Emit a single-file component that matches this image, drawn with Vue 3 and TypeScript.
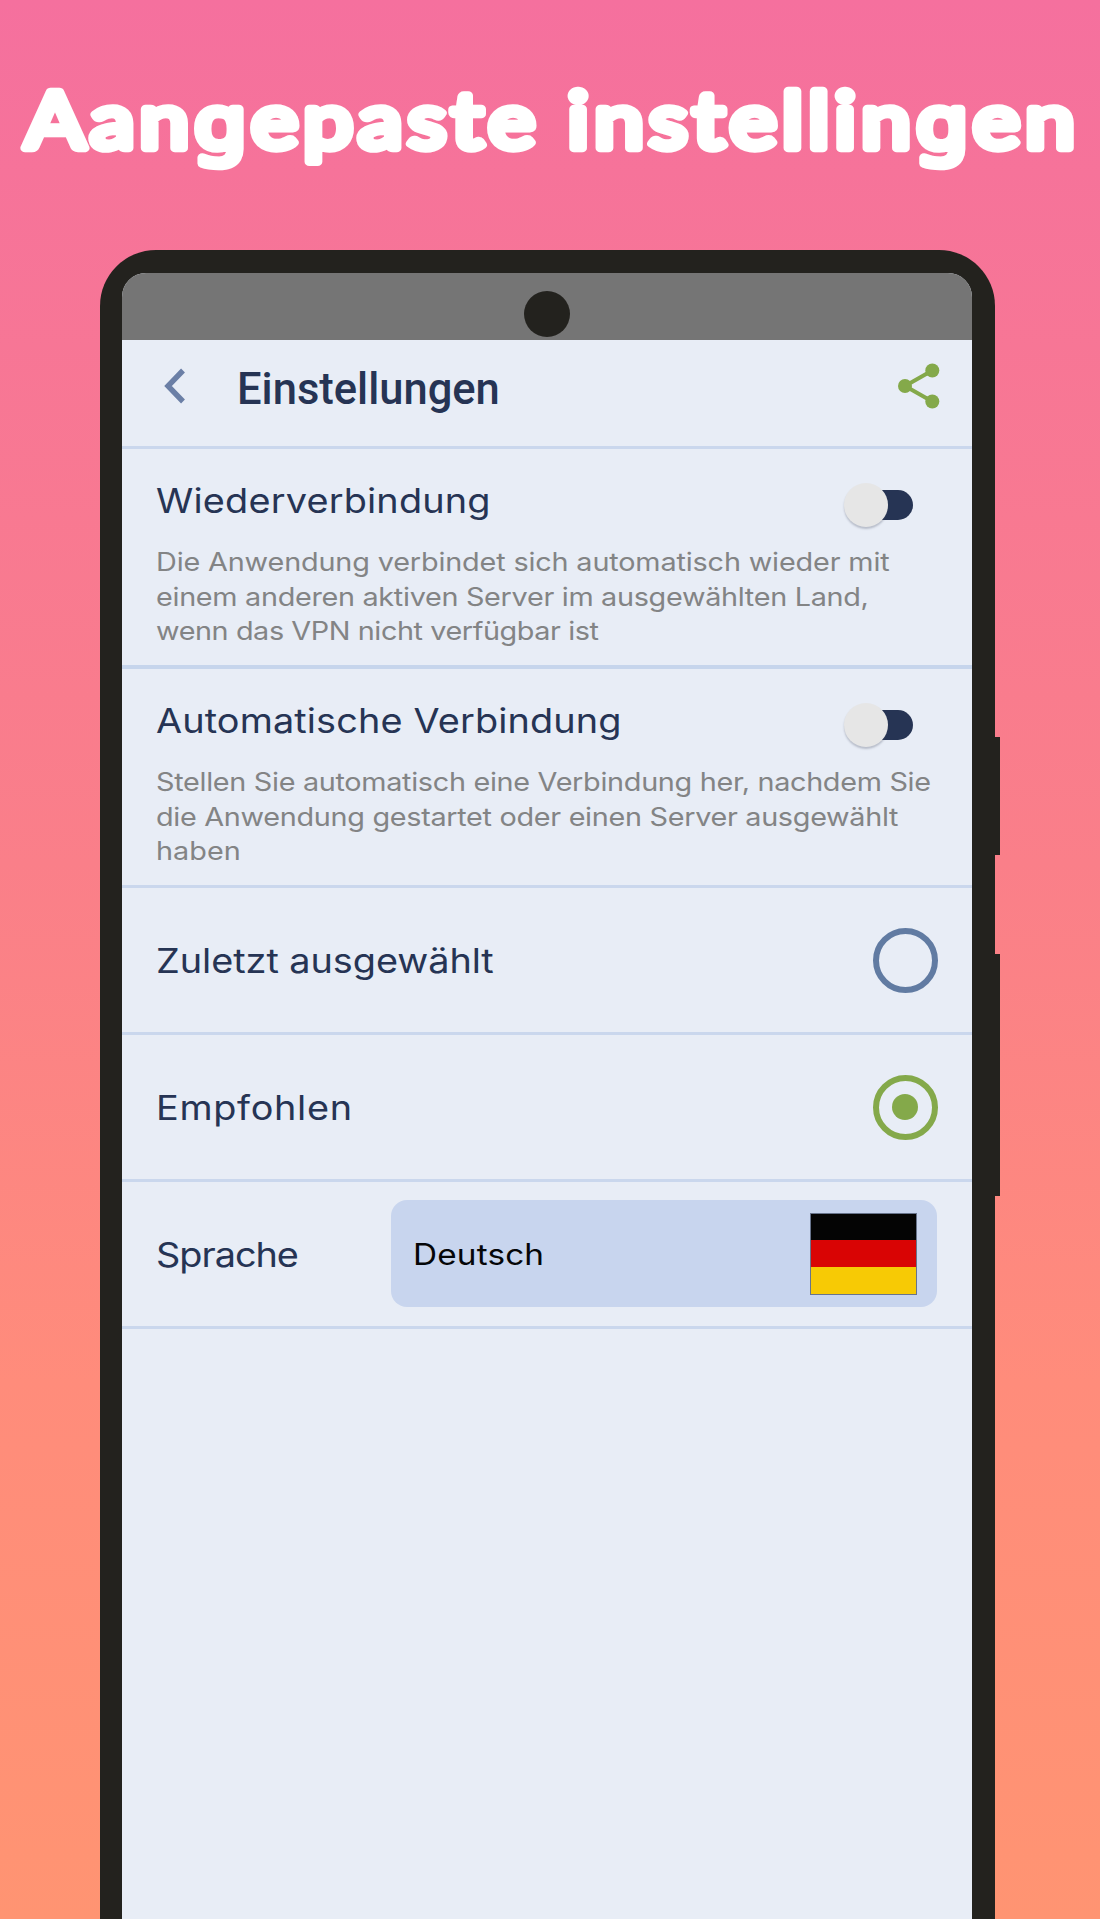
<script setup lang="ts">
import { reactive } from 'vue'

interface Toggle {
  title: string
  titleWidth: number
  lines: { text: string; width: number }[]
  on: boolean
}

const toggles = reactive<Toggle[]>([
  {
    title: 'Wiederverbindung',
    titleWidth: 335,
    lines: [
      { text: 'Die Anwendung verbindet sich automatisch wieder mit', width: 733 },
      { text: 'einem anderen aktiven Server im ausgewählten Land,', width: 712 },
      { text: 'wenn das VPN nicht verfügbar ist', width: 443 },
    ],
    on: false,
  },
  {
    title: 'Automatische Verbindung',
    titleWidth: 466,
    lines: [
      { text: 'Stellen Sie automatisch eine Verbindung her, nachdem Sie', width: 774.5 },
      { text: 'die Anwendung gestartet oder einen Server ausgewählt', width: 742 },
      { text: 'haben', width: 85 },
    ],
    on: false,
  },
])

const options = reactive([
  { label: 'Zuletzt ausgewählt', width: 338, selected: false },
  { label: 'Empfohlen', width: 197, selected: true },
])

function choose(index: number) {
  options.forEach((o, i) => (o.selected = i === index))
}

// Tracks a label out so that it takes the given width, glyphs widened slightly.
const STRETCH = 1.13
const vFit = {
  mounted(el: HTMLElement, binding: { value: number }) {
    const count = (el.textContent ?? '').trim().length
    const gap = (binding.value / STRETCH - el.offsetWidth) / count
    el.style.letterSpacing = `${gap.toFixed(3)}px`
  },
}
</script>

<template>
  <main class="poster">
    <h1 class="headline">
      <svg width="1100" height="130" viewBox="0 0 1100 130">
        <g transform="scale(1.15 1)">
          <text x="21.700" y="84" textLength="443.500">Aan<tspan class="g">g</tspan>epaste</text>
          <text x="493.500" y="84" textLength="441">instellin<tspan class="g">g</tspan>en</text>
        </g>
      </svg>
    </h1>

    <section class="phone">
      <i class="side-button power"></i>
      <i class="side-button volume"></i>
      <div class="screen">
        <div class="status"><span class="camera"></span></div>

        <header class="bar">
          <svg class="back" width="24" height="38" viewBox="0 0 24 38">
            <path d="M20 3.500 L5 19 L20 34.500" fill="none" stroke="#6b7fa6" stroke-width="5.400" />
          </svg>
          <h2>Einstellungen</h2>
          <svg class="share" width="42" height="46" viewBox="0 0 42 46">
            <path d="M34.300 7.500 L7 23 L34.300 38.500" fill="none" stroke="#84a94a" stroke-width="4" />
            <circle cx="34.300" cy="7.500" r="7" />
            <circle cx="7" cy="23" r="7" />
            <circle cx="34.300" cy="38.500" r="7" />
          </svg>
        </header>

        <article v-for="t in toggles" :key="t.title" class="toggle-row">
          <div class="toggle-head">
            <h3 class="label"><span v-fit="t.titleWidth">{{ t.title }}</span></h3>
            <button class="switch" :class="{ on: t.on }" @click="t.on = !t.on"><i></i></button>
          </div>
          <p class="hint">
            <span v-for="l in t.lines" :key="l.text" v-fit="l.width">{{ l.text }}</span>
          </p>
        </article>

        <div v-for="(o, i) in options" :key="o.label" class="option" @click="choose(i)">
          <span class="label"><span v-fit="o.width">{{ o.label }}</span></span>
          <i class="radio" :class="{ selected: o.selected }"></i>
        </div>

        <div class="option language">
          <span class="label"><span v-fit="142">Sprache</span></span>
          <div class="select">
            <span class="value"><span v-fit="131">Deutsch</span></span>
            <span class="flag"><i></i><i></i><i></i></span>
          </div>
        </div>
      </div>
    </section>
  </main>
</template>

<style>
body {
  margin: 0;
}
</style>

<style scoped>
.poster {
  width: 1100px;
  height: 1919px;
  overflow: hidden;
  box-sizing: border-box;
  padding-top: 64px;
  background: linear-gradient(#f5709e, #fa7f89 45%, #ff8c7b 72%, #ff9472);
  font-family: Inter, 'Open Sans', sans-serif;
}

.headline {
  margin: 0;
  height: 186px;
}

.headline text {
  font: 400 77px Lato, sans-serif;
  fill: #fff;
  stroke: #fff;
  stroke-width: 8.500px;
  stroke-linejoin: round;
  stroke-linecap: round;
}

.headline .g {
  font: 400 73px 'Noto Sans', sans-serif;
}

.phone {
  position: relative;
  box-sizing: border-box;
  width: 894.5px;
  height: 1720px;
  margin-left: 100px;
  padding: 23px 22.5px 0 22px;
  border-radius: 56px 56px 0 0;
  background: #23221e;
}

.side-button {
  position: absolute;
  right: -5.5px;
  width: 8px;
  background: #23221e;
}

.power {
  top: 487px;
  height: 118px;
}

.volume {
  top: 704px;
  height: 242px;
}

.screen {
  height: 100%;
  overflow: hidden;
  border-radius: 24px 24px 0 0;
  background: #e8edf6;
}

.status {
  display: flex;
  justify-content: center;
  box-sizing: border-box;
  height: 67px;
  padding: 18px 0 0 0.500px;
  background: #757575;
}

.camera {
  width: 46px;
  height: 46px;
  border-radius: 50%;
  background: #23221e;
}

.bar {
  display: flex;
  align-items: center;
  box-sizing: border-box;
  height: 109px;
  padding: 0 32px 14px 41px;
  border-bottom: 3px solid #cad7ed;
}

.bar h2 {
  flex: 1;
  margin: 7px 0 0 50px;
  font: 500 43.500px/52px Roboto, sans-serif;
  color: #263454;
}

.share {
  fill: #84a94a;
}

.toggle-row {
  box-sizing: border-box;
  height: 220px;
  padding: 26px 0 0 34px;
  border-bottom: 4px solid #c6d5ec;
}

.toggle-row + .toggle-row {
  height: 219px;
  border-bottom: 3px solid #cad7ed;
}

.toggle-head {
  display: flex;
  justify-content: space-between;
  height: 70px;
  padding-right: 59.500px;
}

.label,
.value {
  margin: 0;
  font-weight: 400;
  font-size: 33.500px;
  line-height: 52px;
  color: #263454;
  white-space: nowrap;
}

.label span,
.value span,
.hint span {
  display: inline-block;
  transform: scaleX(1.13);
  transform-origin: 0 50%;
}

.switch {
  display: flex;
  align-items: center;
  width: 69px;
  height: 30px;
  margin: 15px 0 0;
  padding: 0;
  border: 0;
  border-radius: 15px;
  background: linear-gradient(90deg, transparent 50%, #263454 50%);
}

.switch i {
  flex: none;
  width: 44px;
  height: 44px;
  border-radius: 50%;
  background: #e6e6e6;
  box-shadow: 0 2px 2px rgba(60, 70, 90, 0.28);
}

.switch.on {
  justify-content: flex-end;
}

.hint {
  display: flex;
  flex-direction: column;
  align-items: flex-start;
  margin: 0;
  font-size: 25.500px;
  line-height: 34.600px;
  color: #838485;
  white-space: nowrap;
}

.option {
  display: flex;
  align-items: center;
  justify-content: space-between;
  box-sizing: border-box;
  height: 147px;
  padding: 0 34.500px 0 34px;
  border-bottom: 3px solid #cad7ed;
}

.option > .label {
  padding-top: 2px;
}

.radio {
  display: flex;
  align-items: center;
  justify-content: center;
  box-sizing: border-box;
  width: 65px;
  height: 65px;
  border: 6.500px solid #617ba2;
  border-radius: 50%;
}

.radio.selected {
  border-color: #84a94a;
}

.radio.selected::after {
  content: '';
  width: 26px;
  height: 26px;
  border-radius: 50%;
  background: #84a94a;
}

.language {
  padding-right: 35px;
  padding-bottom: 1px;
}

.select {
  display: flex;
  align-items: center;
  justify-content: space-between;
  box-sizing: border-box;
  width: 546px;
  height: 107px;
  padding: 0 20.500px 0 22px;
  border-radius: 16px;
  background: #c8d5ee;
}

.value {
  font-size: 29.500px;
  color: #050608;
}

.flag {
  display: flex;
  flex-direction: column;
  box-sizing: border-box;
  width: 107px;
  height: 82px;
  border: 1px solid #68748c;
}

.flag i {
  flex: 1;
  background: #040404;
}

.flag i:nth-child(2) {
  background: #d90404;
}

.flag i:nth-child(3) {
  background: #f7ca05;
}
</style>
